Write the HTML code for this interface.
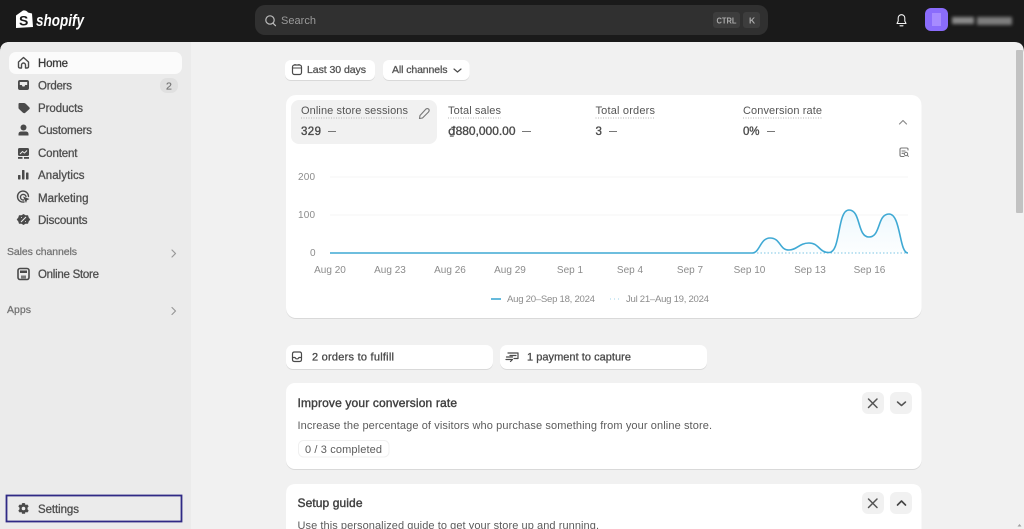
<!DOCTYPE html>
<html lang="en"><head><meta charset="utf-8"><title>Shopify admin</title>
<style>
html,body{margin:0;padding:0;width:1024px;height:529px;overflow:hidden;background:#1a1a1a}
svg{display:block;filter:blur(.35px)}
text{font-family:"Liberation Sans",sans-serif;font-size:11px;fill:#4a4a4a;stroke:none}
.nav{font-size:11.5px;fill:#4f4f4f;stroke:#4f4f4f;stroke-width:.3px}
.sec{font-size:10.5px;fill:#737373;stroke:#737373;stroke-width:.25px}
.m{font-size:11px;fill:#555}
.v{font-size:11.5px;fill:#4a4a4a;stroke:#4a4a4a;stroke-width:.35px}
.t{font-size:10px;fill:#8c8c8c}
.l{font-size:9.6px;fill:#8c8c8c}
.h{font-size:12px;fill:#404040;stroke:#404040;stroke-width:.4px}
.b{font-size:10.5px;fill:#555;stroke:#555;stroke-width:.3px}
.b2{font-size:11px;fill:#4a4a4a;stroke:#4a4a4a;stroke-width:.3px}
.ico{fill:none;stroke:#4a4a4a;stroke-width:1.4;stroke-linecap:round;stroke-linejoin:round}
.f{fill:#4a4a4a;stroke:none}
.card{filter:drop-shadow(0 1px 0 #d9d9d9)}
</style></head><body>
<svg width="1024" height="529" viewBox="0 0 1024 529" xmlns="http://www.w3.org/2000/svg">
<defs><linearGradient id="g" x1="0" y1="0" x2="0" y2="1"><stop offset="0" stop-color="#e6f5fc" stop-opacity=".8"/><stop offset="1" stop-color="#f4fbfe" stop-opacity=".3"/></linearGradient></defs>
<rect width="1024" height="529" fill="#1a1a1a"/>
<path d="M0 529V52Q0 42 10 42H1014Q1024 42 1024 52V529Z" fill="#f1f1f1"/>
<path d="M0 529V52Q0 42 10 42H191V529Z" fill="#ebebeb"/>
<path d="M16 15.500L23 10.500Q26 10 28 12.500L32 13.500L33 27L16 28Z" fill="#fff"/>
<text x="19" y="25.500" style="font-size:14px;font-weight:bold;fill:#1a1a1a">S</text>
<text x="36" y="26" textLength="48" lengthAdjust="spacingAndGlyphs" style="font-size:16.5px;font-weight:bold;font-style:italic;fill:#fff">shopify</text>
<rect x="255" y="5" width="513" height="30" rx="10" fill="#303030"/>
<circle cx="270" cy="20" r="4.2" fill="none" stroke="#bbb" stroke-width="1.2"/><path d="M273 23.2L275.5 25.700" stroke="#bbb" stroke-width="1.2" stroke-linecap="round"/>
<text x="281" y="24" textLength="35" style="font-size:11px;fill:#9a9a9a">Search</text>
<rect x="713" y="12" width="27" height="16" rx="3" fill="#3d3d3d"/><rect x="743" y="12" width="17" height="16" rx="3" fill="#3d3d3d"/>
<text x="716.500" y="23.500" textLength="20" lengthAdjust="spacingAndGlyphs" style="font-size:8.500px;font-weight:bold;fill:#aaa">CTRL</text>
<text x="749" y="23.500" style="font-size:8.500px;font-weight:bold;fill:#aaa">K</text>
<path d="M897 23.500H906L904.800 21V18A3.300 3.300 0 0 0 898.200 18V21ZM900 25.800H903" fill="none" stroke="#f4f4f4" stroke-width="1.050" stroke-linejoin="round" stroke-linecap="round"/>
<rect x="925" y="8" width="23" height="23" rx="6" fill="#8a6cfb"/><rect x="932" y="13" width="9" height="13" fill="#a78bff"/>
<g style="filter:blur(1.600px)"><rect x="952" y="17" width="22" height="7" fill="#8a8a8a"/><rect x="977" y="17" width="35" height="8" fill="#7d7d7d"/></g>
<rect x="1016" y="50" width="7" height="163" rx="1" fill="#c2c2c2"/>
<path d="M1019.500 524l-2 2.500h4z" fill="#a0a0a0"/>

<rect x="9" y="52" width="173" height="22" rx="7" fill="#fbfbfb"/>
<path class="ico" d="M18.500 62L23.500 57.500L28.500 62V66.500Q28.500 68 27 68H25.500V65A2 2 0 0 0 21.500 65V68H20Q18.500 68 18.500 66.500Z"/>
<path class="f" d="M20 80H27Q29 80 29 82V88Q29 90 27 90H20Q18 90 18 88V82Q18 80 20 80ZM19.800 82V85H21.800L22.500 86.500H24.500L25.200 85H27.200V82Z"/>
<path class="f" d="M18.500 104Q18.500 103 19.500 103H24Q25 103 26 104L29.500 107.500Q30 108.500 29.500 109L25 113Q24 113.500 23 112.800L19 109Q18.500 108.500 18.500 108Z"/>
<circle class="f" cx="23.500" cy="127.500" r="3"/><path class="f" d="M18.500 135.500V134Q18.500 131.500 21.500 131.500H25.500Q28.500 131.500 28.500 134V135.500Z"/>
<rect x="18" y="148" width="11" height="8" rx="1.500" fill="#4a4a4a"/><path d="M20 154L22.500 151.500L24.500 153L27 150.500" stroke="#ebebeb" fill="none"/><rect x="18" y="157" width="4.500" height="1.800" fill="#4a4a4a"/><rect x="24" y="157" width="5" height="1.800" fill="#4a4a4a"/>
<rect x="18" y="175" width="2.500" height="4.500" rx=".6" class="f"/><rect x="22" y="170" width="2.500" height="9.500" rx=".6" class="f"/><rect x="26" y="172.500" width="2.500" height="7" rx=".6" class="f"/>
<path class="ico" d="M28.500 196.500A5.500 5.500 0 1 0 24 202M26 196.500A2.800 2.800 0 1 0 23.500 200"/><path class="f" d="M23 196.500L29.500 199L27 200.300L26 203Z"/>
<path class="f" d="M23.500 214L25.500 215.300L28 215.300L28.700 217.500L30.300 219.500L28.700 221.500L28 223.700L25.500 223.700L23.500 225L21.500 223.700L19 223.700L18.300 221.500L16.700 219.500L18.300 217.500L19 215.300L21.500 215.300Z"/><path d="M21 222L26 217M21.200 217.500h.8M25 221.500h.8" stroke="#ebebeb" stroke-width="1.100"/>
<rect x="18" y="268.500" width="11" height="11" rx="2" fill="none" stroke="#4a4a4a" stroke-width="1.600"/><path d="M20 270.500H27V273H20Z" class="f"/><path d="M21 275.500H26V278.500H21Z" class="f" opacity=".7"/>
<path class="f" fill-rule="evenodd" d="M23.500 503L25 503.300L25.500 505L27.300 504.500L28.700 506.300L27.500 507.800L27.500 509.200L28.700 510.700L27.300 512.500L25.500 512L25 513.700L22 513.700L21.500 512L19.700 512.500L18.300 510.700L19.500 509.200L19.500 507.800L18.300 506.300L19.700 504.500L21.500 505L22 503.300ZM23.500 506.700A1.800 1.800 0 1 0 23.500 510.300A1.800 1.800 0 1 0 23.500 506.700Z"/>

<text class="nav" x="38" y="67" textLength="30" style="fill:#3a3a3a;stroke:#3a3a3a">Home</text>
<text class="nav" x="38" y="89.500" textLength="34">Orders</text>
<text class="nav" x="38" y="112" textLength="45">Products</text>
<text class="nav" x="38" y="134" textLength="54">Customers</text>
<text class="nav" x="38" y="157" textLength="39.500">Content</text>
<text class="nav" x="38" y="179" textLength="46.500">Analytics</text>
<text class="nav" x="38" y="202" textLength="50.500">Marketing</text>
<text class="nav" x="38" y="224" textLength="49.500">Discounts</text>
<text class="sec" x="7" y="255" textLength="70">Sales channels</text>
<text class="nav" x="38" y="278" textLength="61">Online Store</text>
<text class="sec" x="7" y="313" textLength="24">Apps</text>
<rect x="160" y="78" width="18" height="15" rx="7" fill="#e0e0e0"/>
<text x="166" y="89.500" style="font-size:10.500px;fill:#777;stroke:#777;stroke-width:.25px">2</text>
<path d="M172 250L175.500 253.500L172 257M172 307.500L175.500 311L172 314.500" fill="none" stroke="#999" stroke-width="1.200" stroke-linecap="round" stroke-linejoin="round"/>
<rect x="6.500" y="495.500" width="175" height="26" fill="none" stroke="#2f2a85" stroke-width="1.800"/>
<text class="nav" x="38" y="513" textLength="41">Settings</text>

<g class="card"><rect x="285" y="60" width="90" height="20" rx="6" fill="#fff"/><rect x="383" y="60" width="86.500" height="20" rx="6" fill="#fff"/></g>
<rect x="292.500" y="65" width="9" height="9.500" rx="2" fill="none" stroke="#4a4a4a" stroke-width="1.200"/><path d="M292.500 68H301.500M295 64V65.500M299 64V65.500" stroke="#4a4a4a" stroke-width="1.100"/>
<text class="b" x="307" y="73" textLength="59">Last 30 days</text>
<text class="b" x="392" y="73" textLength="55.500">All channels</text>
<path d="M454 69L457.500 72L461 69" fill="none" stroke="#4a4a4a" stroke-width="1.200" stroke-linecap="round" stroke-linejoin="round"/>

<g class="card"><rect x="286" y="95" width="635.500" height="223" rx="10" fill="#fff"/></g>
<rect x="291" y="100" width="146" height="44" rx="8" fill="#f1f1f1"/>
<text class="m" x="301" y="114" textLength="107">Online store sessions</text>
<text class="m" x="448" y="114" textLength="53">Total sales</text>
<text class="m" x="595.500" y="114" textLength="59.500">Total orders</text>
<text class="m" x="743" y="114" textLength="79">Conversion rate</text>
<path d="M301 118H408M448 118H501M595.500 118H655M743 118H822" stroke="#b5b5b5" stroke-width="1" stroke-dasharray="1 1.500"/>
<text class="v" x="301" y="135" textLength="20">329</text>
<text class="v" x="448" y="135" textLength="67.500" lengthAdjust="spacingAndGlyphs"><tspan style="font-family:'DejaVu Sans',sans-serif">₫</tspan>880,000.00</text>
<text class="v" x="595.500" y="135">3</text>
<text class="v" x="743" y="135" textLength="16.500">0%</text>
<path d="M328 131.500H336M522 131.500H531M609 131.500H617M767 131.500H775" stroke="#777" stroke-width="1.100"/>
<path d="M419.500 118.500L420 115.500L426 109Q427.500 108 428.800 109.200Q429.700 110.500 428.500 112L422.500 118Z" fill="none" stroke="#777" stroke-width="1.100" stroke-linejoin="round"/>
<path d="M899.500 124L903 120.500L906.500 124" fill="none" stroke="#8a8a8a" stroke-width="1.200" stroke-linecap="round" stroke-linejoin="round"/>
<path d="M908 150V149Q908 148 906.500 148H901.500Q900 148 900 149.500V155Q900 156.500 901.500 156.500H904M902 151H905M902 153.300H903.500" fill="none" stroke="#777" stroke-width="1.100" stroke-linecap="round"/><circle cx="906" cy="154" r="1.700" fill="none" stroke="#777"/><path d="M907.300 155.300L908.700 156.700" stroke="#777"/>

<path d="M330 177H908M330 215H908" stroke="#f5f5f5" stroke-width="1"/>
<text class="t" x="298" y="180" textLength="17">200</text><text class="t" x="298" y="218" textLength="17">100</text><text class="t" x="310" y="256">0</text>
<path d="M752 253C760 253 760 238 770 238C781 238 779 250 789 250C797 250 799 243 809 243C819 243 819 252.500 829 252.500C841 252.500 837 210 849 210C861 210 857 237 869 237C881 237 877 214 889 214C901 214 899 253 908 253Z" fill="url(#g)"/>
<path d="M750 253H908" stroke="#7cc6e4" stroke-width="1" stroke-dasharray="1.500 2"/>
<path d="M330 253H752C760 253 760 238 770 238C781 238 779 250 789 250C797 250 799 243 809 243C819 243 819 252.500 829 252.500C841 252.500 837 210 849 210C861 210 857 237 869 237C881 237 877 214 889 214C901 214 899 253 908 253" fill="none" stroke="#3fa9d4" stroke-width="1.600"/>
<g text-anchor="middle">
<text class="t" x="330" y="273">Aug 20</text><text class="t" x="390" y="273">Aug 23</text><text class="t" x="450" y="273">Aug 26</text><text class="t" x="510" y="273">Aug 29</text><text class="t" x="570" y="273">Sep 1</text><text class="t" x="630" y="273">Sep 4</text><text class="t" x="690" y="273">Sep 7</text><text class="t" x="749.500" y="273">Sep 10</text><text class="t" x="810" y="273">Sep 13</text><text class="t" x="869.500" y="273">Sep 16</text>
</g>
<path d="M491 299H501" stroke="#3fa9d4" stroke-width="1.600"/><path d="M610 299H620" stroke="#9fd3e8" stroke-dasharray="1 3"/>
<text class="l" x="507" y="302" textLength="88">Aug 20–Sep 18, 2024</text>
<text class="l" x="626" y="302" textLength="83">Jul 21–Aug 19, 2024</text>

<g class="card"><rect x="286" y="345" width="207" height="24" rx="7" fill="#fff"/><rect x="500" y="345" width="207" height="24" rx="7" fill="#fff"/></g>
<path d="M292.500 354Q292.500 352 294.500 352H299.500Q301.500 352 301.500 354V359.500Q301.500 361.500 299.500 361.500H294.500Q292.500 361.500 292.500 359.500ZM292.500 357.500H295L296 358.800H298L299 357.500H301.500" fill="none" stroke="#4a4a4a" stroke-width="1.200" stroke-linejoin="round"/>
<text class="b2" x="312" y="360.500" textLength="82">2 orders to fulfill</text>
<path d="M508 353H518V358.500H514M506.500 357H512.500M506 359.500H512.500L510.500 361.500M510 355.500H516" fill="none" stroke="#4a4a4a" stroke-width="1.200" stroke-linecap="round" stroke-linejoin="round"/>
<text class="b2" x="527" y="360.500" textLength="104">1 payment to capture</text>

<g class="card"><rect x="286" y="383" width="635.500" height="86" rx="9" fill="#fff"/><path d="M286 529V494Q286 484 296 484H911.500Q921.500 484 921.500 494V529Z" fill="#fff"/></g>
<text class="h" x="297.500" y="407" textLength="159.500">Improve your conversion rate</text>
<text x="297.500" y="429" textLength="414.500" style="font-size:11px;fill:#5c5c5c">Increase the percentage of visitors who purchase something from your online store.</text>
<rect x="298.500" y="440.500" width="90.500" height="16.500" rx="5" fill="#fff" stroke="#f0f0f0"/>
<text x="305" y="453" textLength="77" style="font-size:11px;fill:#5c5c5c">0 / 3 completed</text>
<text class="h" x="297.500" y="507" textLength="65">Setup guide</text>
<text x="297.500" y="529" textLength="301.500" style="font-size:11px;fill:#5c5c5c">Use this personalized guide to get your store up and running.</text>
<rect x="862" y="392" width="22" height="22" rx="6" fill="#f1f1f1"/><rect x="890" y="392" width="22" height="22" rx="6" fill="#f1f1f1"/>
<rect x="862" y="492" width="22" height="22" rx="6" fill="#f1f1f1"/><rect x="890" y="492" width="22" height="22" rx="6" fill="#f1f1f1"/>
<path d="M868.500 399L877 407.500M877 399L868.500 407.500M868.500 499L877 507.500M877 499L868.500 507.500" stroke="#555" stroke-width="1.500" stroke-linecap="round"/>
<path d="M897.500 402L901.500 405.500L905.500 402" fill="none" stroke="#555" stroke-width="1.500" stroke-linecap="round" stroke-linejoin="round"/>
<path d="M897.500 505L901.500 501L905.500 505" fill="none" stroke="#444" stroke-width="1.600" stroke-linecap="round" stroke-linejoin="round"/>
</svg>
</body></html>
